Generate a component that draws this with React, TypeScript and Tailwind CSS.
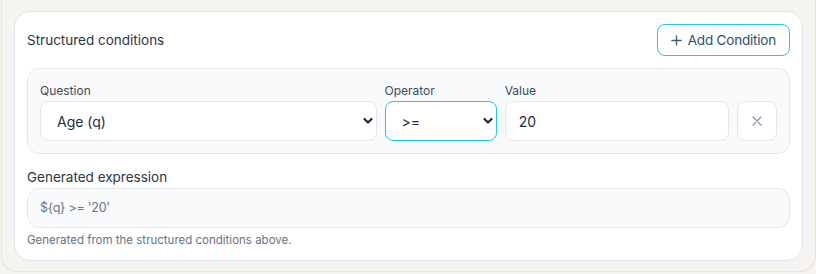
import { useState } from "react"

const Chevron = () => (
  <svg
    className="pointer-events-none absolute right-[4px] top-1/2 -translate-y-1/2"
    width="10"
    height="7"
    viewBox="0 0 10 7"
    fill="none"
  >
    <path d="M1.5 1.5 5 5l3.5-3.5" stroke="#1e293b" strokeWidth="2.2" strokeLinecap="round" strokeLinejoin="round" />
  </svg>
)

const App = () => {
  const [question, setQuestion] = useState("q")
  const [operator, setOperator] = useState(">=")
  const [value, setValue] = useState("20")

  return (
    <div className="min-h-[274px] bg-[#f6f4f0] font-['Inter',sans-serif]">
      <div className="ml-px h-[272px] rounded-b-2xl border-x border-b border-[#e9e4dc] px-3 pt-[11px]">
        <div className="rounded-2xl border border-[#dfe6ef] bg-white p-3">
          {/* header */}
          <div className="mb-3 flex items-center justify-between">
            <h3 className="text-[13.5px] text-[#2b3645]">Structured conditions</h3>
            <button className="flex h-8 items-center gap-[6px] rounded-lg border border-[#29c6e3] bg-white px-[13px] text-[13.5px] tracking-[-0.015em] text-[#2c4f6e]">
              <svg width="11" height="11" viewBox="0 0 12 12" fill="none">
                <path d="M6 1v10M1 6h10" stroke="#3a5a78" strokeWidth="1.4" strokeLinecap="round" />
              </svg>
              Add Condition
            </button>
          </div>

          {/* condition row */}
          <div className="rounded-xl border border-[#e3e8ef] bg-[#f8fafc] p-3">
            <div className="grid grid-cols-[3fr_1fr_2fr_40px] items-end gap-2">
              <div>
                <label className="block text-[12px] leading-5 text-[#3f4a58]">Question</label>
                <div className="relative">
                  <select
                    value={question}
                    onChange={(e) => setQuestion(e.target.value)}
                    className="h-10 w-full appearance-none rounded-lg border border-[#e3e8ef] bg-white pl-4 text-[14px] text-[#1f2d3d] outline-none"
                  >
                    <option value="q">Age (q)</option>
                  </select>
                  <Chevron />
                </div>
              </div>
              <div>
                <label className="block text-[12px] leading-5 text-[#3f4a58]">Operator</label>
                <div className="relative">
                  <select
                    value={operator}
                    onChange={(e) => setOperator(e.target.value)}
                    className="h-10 w-full appearance-none rounded-lg border border-[#22c9e6] bg-white pl-4 text-[14px] text-[#1f2d3d] outline-none"
                  >
                    <option value="=">=</option>
                    <option value=">=">&gt;=</option>
                    <option value="<=">&lt;=</option>
                  </select>
                  <Chevron />
                </div>
              </div>
              <div>
                <label className="block text-[12px] leading-5 text-[#3f4a58]">Value</label>
                <input
                  value={value}
                  onChange={(e) => setValue(e.target.value)}
                  className="h-10 w-full rounded-lg border border-[#e3e8ef] bg-white px-[13px] text-[14px] text-[#1f2d3d] outline-none"
                />
              </div>
              <button className="flex h-10 w-10 items-center justify-center rounded-lg border border-[#e3e8ef] bg-white">
                <svg width="12" height="12" viewBox="0 0 12 12" fill="none">
                  <path d="M2 2l8 8M10 2 2 10" stroke="#8a96a6" strokeWidth="1.3" strokeLinecap="round" />
                </svg>
              </button>
            </div>
          </div>

          {/* expression */}
          <div className="mt-[13px]">
            <label className="block text-[13.5px] leading-5 text-[#2b3645]">Generated expression</label>
            <div className="mt-px flex h-10 items-center rounded-xl border border-[#e3e8ef] bg-[#f8fafc] px-[12px] text-[12.5px] tracking-[-0.02em] text-[#6b7483]">
              {"${" + question + "} " + operator + " '" + value + "'"}
            </div>
            <p className="mt-[4px] text-[11.5px] leading-4 text-[#667386]">
              Generated from the structured conditions above.
            </p>
          </div>
        </div>
      </div>
    </div>
  )
}

export default App
